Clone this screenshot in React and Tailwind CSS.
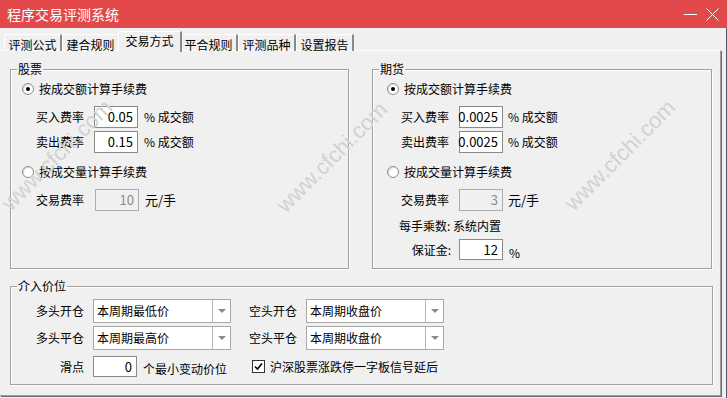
import React from "react";

const FONT = { fontFamily: '"Noto Sans CJK SC", "Microsoft YaHei", sans-serif' };

const tabs = ["评测公式", "建合规则", "交易方式", "平合规则", "评测品种", "设置报告"];

const Radio = ({ checked }) => (
  <span className="w-[12px] h-[12px] rounded-full border border-[#8c8c8c] bg-white flex items-center justify-center shadow-[inset_1px_1px_1px_rgba(0,0,0,0.15)]">
    {checked && <span className="w-[4px] h-[4px] rounded-full bg-black" />}
  </span>
);

const NumBox = ({ value, disabled, h = "h-[22px]" }) => (
  <div
    className={`w-[44px] ${h} border flex items-center justify-end pr-[4px] text-[13px] ${
      disabled
        ? "border-[#adadad] bg-[#f0f0f0] text-[#8a8a8a]"
        : "border-[#8a8a8a] bg-white text-black"
    }`}
  >
    {value}
  </div>
);

const Select = ({ value }) => (
  <div className="w-[138px] h-[24px] border border-[#a8a8a8] bg-white flex items-center">
    <span className="flex-1 pl-[3px] text-[12px]">{value}</span>
    <span className="w-[18px] h-full border-l border-[#b8b8b8] flex items-center justify-center">
      <svg width="8" height="5" viewBox="0 0 8 5">
        <path d="M0 0 L8 0 L4 4 Z" fill="#8a8a8a" />
      </svg>
    </span>
  </div>
);

const Group = ({ title, className, children }) => (
  <fieldset
    className={`border border-[#a0a0a0] shadow-[1px_1px_0_#fff,inset_1px_1px_0_#fff] ${className}`}
  >
    <legend className="ml-[6px] px-[1px] text-[12px] leading-[16px]">{title}</legend>
    {children}
  </fieldset>
);

const Watermark = ({ className }) => (
  <span
    className={`absolute pointer-events-none -translate-x-1/2 -translate-y-1/2 -rotate-[45deg] text-[22px] text-[#d2d2d2] whitespace-nowrap ${className}`}
    style={{ fontFamily: '"Liberation Sans", Arial, sans-serif' }}
  >
    www.cfchi.com
  </span>
);

const App = () => {
  return (
    <div
      className="relative w-[727px] h-[398px] bg-[#f0f0f0] flex flex-col overflow-hidden text-black"
      style={FONT}
    >
      {/* title bar */}
      <div className="h-[28px] bg-[#e3484b] flex items-center justify-between pl-[7px] pr-[8px]">
        <span className="text-white text-[14px] leading-none">程序交易评测系统</span>
        <div className="flex items-center gap-[8px]">
          <svg width="14" height="14" viewBox="0 0 14 14">
            <path d="M0 7.5 H13" stroke="#fff" strokeWidth="1" />
          </svg>
          <svg width="13" height="13" viewBox="0 0 13 13">
            <path d="M0.5 0.5 L12.5 12.5 M12.5 0.5 L0.5 12.5" stroke="#fff" strokeWidth="1" />
          </svg>
        </div>
      </div>

      <div className="flex-1 border-r border-[#4d5a80] pt-[3px]">
        {/* tabs */}
        <div className="flex items-end h-[20px] pl-[4px]">
          {tabs.map((t, i) =>
            i === 2 ? (
              <div
                key={t}
                className="relative z-10 -mx-[2px] w-[64px] h-[21px] -mb-[1px] bg-[#f0f0f0] border-l border-t border-white border-r-2 border-r-[#8a8a8a] flex items-start justify-center pt-[2px] text-[12px] leading-[14px]"
              >
                {t}
              </div>
            ) : (
              <div
                key={t}
                className="w-[58px] h-[17px] border-l border-t border-white border-r-2 border-r-[#8a8a8a] flex items-start justify-center pt-[3px] text-[12px] leading-[14px]"
              >
                {t}
              </div>
            )
          )}
        </div>

        {/* tab page */}
        <div className="w-[721px] h-[346px] -mt-[1px] border-t border-white border-r border-b border-r-[#a0a0a0] border-b-[#a0a0a0] shadow-[1px_1px_0_#696969] pt-[10px] pl-[10px]">
          <div className="flex gap-[23px]">
            <Group title="股票" className="w-[339px] h-[208px]">
              <div className="text-[12px]">
                <div className="mt-[4px] h-[16px] flex items-center pl-[11px] gap-[5px]">
                  <Radio checked />
                  <span>按成交额计算手续费</span>
                </div>
                <div className="mt-[9px] h-[22px] flex items-center pl-[25px]">
                  <span className="w-[58px]">买入费率</span>
                  <NumBox value="0.05" />
                  <span className="ml-[6px]">% 成交额</span>
                </div>
                <div className="mt-[3px] h-[22px] flex items-center pl-[25px]">
                  <span className="w-[58px]">卖出费率</span>
                  <NumBox value="0.15" />
                  <span className="ml-[6px]">% 成交额</span>
                </div>
                <div className="mt-[11px] h-[16px] flex items-center pl-[11px] gap-[5px]">
                  <Radio />
                  <span>按成交量计算手续费</span>
                </div>
                <div className="mt-[9px] h-[22px] flex items-center pl-[25px]">
                  <span className="w-[59px]">交易费率</span>
                  <NumBox value="10" disabled />
                  <span className="ml-[6px] text-[13px]">元/手</span>
                </div>
              </div>
            </Group>

            <Group title="期货" className="w-[340px] h-[208px]">
              <div className="text-[12px]">
                <div className="mt-[4px] h-[16px] flex items-center pl-[14px] gap-[5px]">
                  <Radio checked />
                  <span>按成交额计算手续费</span>
                </div>
                <div className="mt-[9px] h-[22px] flex items-center pl-[28px]">
                  <span className="w-[58px]">买入费率</span>
                  <NumBox value="0.0025" />
                  <span className="ml-[5px]">% 成交额</span>
                </div>
                <div className="mt-[3px] h-[22px] flex items-center pl-[28px]">
                  <span className="w-[58px]">卖出费率</span>
                  <NumBox value="0.0025" />
                  <span className="ml-[5px]">% 成交额</span>
                </div>
                <div className="mt-[11px] h-[16px] flex items-center pl-[14px] gap-[5px]">
                  <Radio />
                  <span>按成交量计算手续费</span>
                </div>
                <div className="mt-[9px] h-[22px] flex items-center pl-[28px]">
                  <span className="w-[58px]">交易费率</span>
                  <NumBox value="3" disabled />
                  <span className="ml-[5px] text-[13px]">元/手</span>
                </div>
                <div className="mt-[7px] h-[16px] flex items-center pl-[26px]">
                  每手乘数: 系统内置
                </div>
                <div className="mt-[5px] h-[21px] flex items-center pl-[28px]">
                  <span className="w-[58px] text-right pr-[8px]">保证金:</span>
                  <NumBox value="12" h="h-[21px]" />
                  <span className="ml-[6px] mt-[6px]">%</span>
                </div>
              </div>
            </Group>
          </div>

          <Group title="介入价位" className="mt-[9px] w-[703px] h-[107px]">
            <div className="text-[12px]">
              <div className="mt-[5px] h-[24px] flex items-center">
                <div className="w-[220px] flex items-center">
                  <span className="w-[73px] text-right">多头开仓</span>
                  <span className="ml-[9px]">
                    <Select value="本周期最低价" />
                  </span>
                </div>
                <span className="ml-[18px] w-[48px]">空头开仓</span>
                <span className="ml-[9px]">
                  <Select value="本周期收盘价" />
                </span>
              </div>
              <div className="mt-[3px] h-[24px] flex items-center">
                <div className="w-[220px] flex items-center">
                  <span className="w-[73px] text-right">多头平仓</span>
                  <span className="ml-[9px]">
                    <Select value="本周期最高价" />
                  </span>
                </div>
                <span className="ml-[18px] w-[48px]">空头平仓</span>
                <span className="ml-[9px]">
                  <Select value="本周期收盘价" />
                </span>
              </div>
              <div className="mt-[6px] h-[21px] flex items-center">
                <div className="w-[220px] flex items-center">
                  <span className="w-[73px] text-right">滑点</span>
                  <span className="ml-[9px]">
                    <NumBox value="0" h="h-[21px]" />
                  </span>
                  <span className="ml-[6px] mt-[4px]">个最小变动价位</span>
                </div>
                <span className="ml-[21px] w-[13px] h-[13px] border border-[#333] bg-white flex items-center justify-center">
                  <svg width="9" height="9" viewBox="0 0 9 9">
                    <path d="M1 4.5 L3.5 7 L8 1.5" stroke="#000" strokeWidth="1.6" fill="none" />
                  </svg>
                </span>
                <span className="ml-[5px]">沪深股票涨跌停一字板信号延后</span>
              </div>
            </div>
          </Group>
        </div>
      </div>

      <Watermark className="left-[57px] top-[155px]" />
      <Watermark className="left-[332px] top-[157px]" />
      <Watermark className="left-[620px] top-[155px]" />
    </div>
  );
};

export default App;
